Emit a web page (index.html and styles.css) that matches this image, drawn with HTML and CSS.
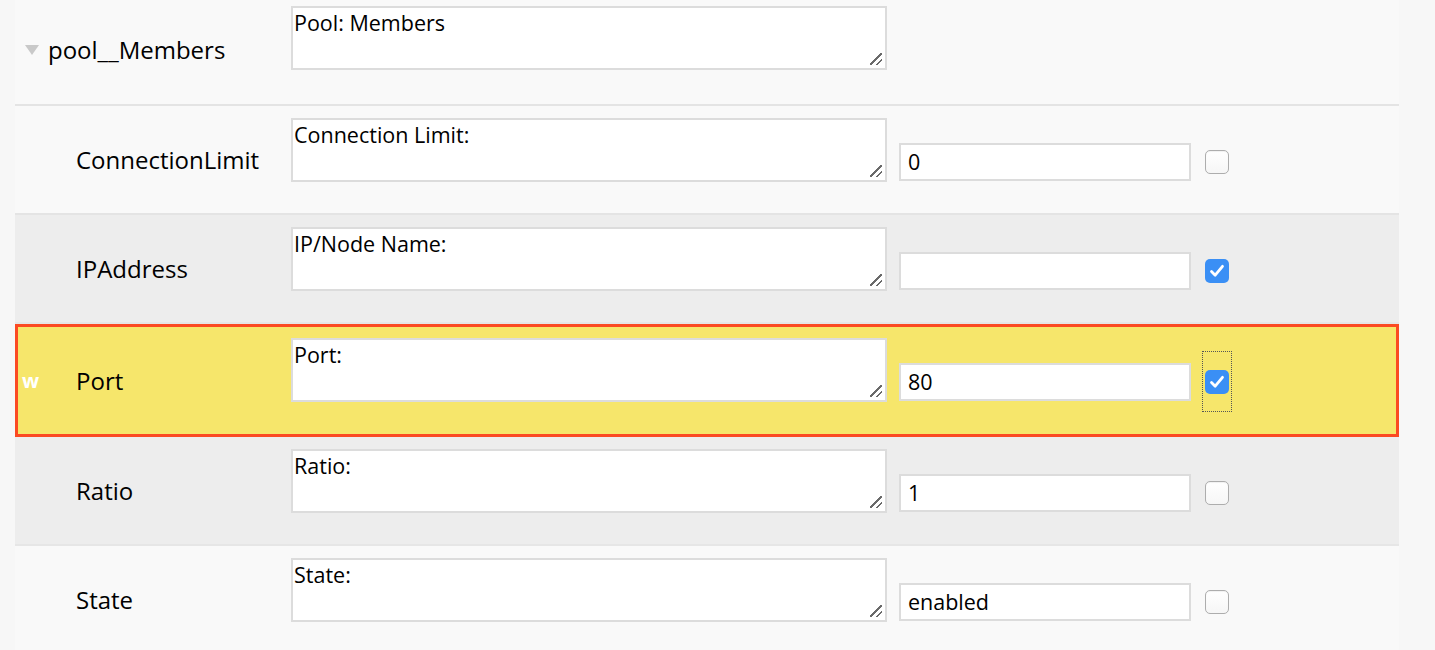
FILE: index.html
```html
<!DOCTYPE html>
<html lang="en">
<head>
<meta charset="utf-8">
<title>pool__Members</title>
<link rel="stylesheet" href="styles.css">
</head>
<body>
<div class="sheet">
  <div class="group-head">
    <div class="group-label"><span class="caret"></span><span>pool__Members</span></div>
    <textarea class="desc">Pool: Members</textarea>
  </div>

  <div class="row row--light">
    <div class="label"><span class="marker"></span><span>ConnectionLimit</span></div>
    <textarea class="desc">Connection Limit:</textarea>
    <div class="value">
      <input class="text" type="text" value="0">
      <span class="check-wrap"><span class="check"></span></span>
    </div>
  </div>

  <div class="row row--gray">
    <div class="label"><span class="marker"></span><span>IPAddress</span></div>
    <textarea class="desc">IP/Node Name:</textarea>
    <div class="value">
      <input class="text" type="text" value="">
      <span class="check-wrap"><span class="check check--on"><svg viewBox="0 0 24 24" width="24" height="24"><path d="M6.5 12.5 L10.2 16.2 L17.5 7.3" fill="none" stroke="#fff" stroke-width="2.8" stroke-linecap="round" stroke-linejoin="round"/></svg></span></span>
    </div>
  </div>

  <div class="row row--flagged">
    <div class="label"><span class="marker">w</span><span>Port</span></div>
    <textarea class="desc">Port:</textarea>
    <div class="value">
      <input class="text" type="text" value="80">
      <span class="check-wrap check-wrap--focus"><span class="check check--on"><svg viewBox="0 0 24 24" width="24" height="24"><path d="M6.5 12.5 L10.2 16.2 L17.5 7.3" fill="none" stroke="#fff" stroke-width="2.8" stroke-linecap="round" stroke-linejoin="round"/></svg></span></span>
    </div>
  </div>

  <div class="row row--gray">
    <div class="label"><span class="marker"></span><span>Ratio</span></div>
    <textarea class="desc">Ratio:</textarea>
    <div class="value">
      <input class="text" type="text" value="1">
      <span class="check-wrap"><span class="check"></span></span>
    </div>
  </div>

  <div class="row row--light">
    <div class="label"><span class="marker"></span><span>State</span></div>
    <textarea class="desc">State:</textarea>
    <div class="value">
      <input class="text" type="text" value="enabled">
      <span class="check-wrap"><span class="check"></span></span>
    </div>
  </div>
</div>
</body>
</html>
```

FILE: styles.css
```css
html, body {
  margin: 0;
  padding: 0;
  background: #f7f7f7;
  font-family: "Open Sans", "Noto Sans", sans-serif;
  color: #000;
  overflow: hidden;
}

.sheet {
  margin: 0 36px 0 15px;
  background: #f9f9f9;
}

.group-head {
  display: flex;
  align-items: flex-start;
  height: 106px;
  box-sizing: border-box;
  padding-top: 6px;
  border-bottom: 2px solid #e4e4e4;
}

.group-label {
  width: 276px;
  flex: none;
  display: flex;
  align-items: center;
  height: 86px;
  padding-left: 10px;
  box-sizing: border-box;
  font-size: 24px;
}

.caret {
  width: 0;
  height: 0;
  border-left: 7px solid transparent;
  border-right: 7px solid transparent;
  border-top: 10px solid #c9c9c9;
  margin-right: 9px;
  margin-top: 2px;
}

.desc {
  flex: none;
  width: 596px;
  height: 64px;
  box-sizing: border-box;
  border: 2px solid #dcdcdc;
  border-radius: 0;
  background-color: #fff;
  background-image: linear-gradient(135deg, transparent 0 44%, #6a6a6a 44% 55%, transparent 55% 71%, #6a6a6a 71% 82%, transparent 82%);
  background-size: 12px 12px;
  background-position: right 3px bottom 3px;
  background-repeat: no-repeat;
  margin: 0;
  padding: 0 1px;
  font-family: "Open Sans", "Noto Sans", sans-serif;
  font-size: 21.5px;
  color: #000;
  resize: none;
  outline: none;
}

.row {
  display: flex;
  align-items: flex-start;
  height: 109px;
  box-sizing: border-box;
  padding-top: 12px;
  border-bottom: 2px solid #e4e4e4;
}

.row--light { background: #f9f9f9; }
.row--gray { background: #ededed; border-bottom-color: #e6e6e6; }

.row--flagged {
  background: #f6e66b;
  height: 113px;
  padding-top: 14px;
  border-bottom: 0;
  outline: 3px solid #fb4a22;
  outline-offset: -3px;
}

.label {
  flex: none;
  width: 276px;
  align-self: stretch;
  display: flex;
  align-items: center;
  padding-left: 7px;
  box-sizing: border-box;
  font-size: 24px;
  margin-top: -12px;
}

.row--flagged .label { margin-top: -14px; }

.marker {
  width: 54px;
  flex: none;
  color: #fff;
  font-weight: 700;
  font-size: 20px;
}

.value {
  display: flex;
  align-items: center;
  margin-left: 12px;
  margin-top: 14px;
}

.text {
  width: 292px;
  height: 38px;
  box-sizing: border-box;
  border: 2px solid #dcdcdc;
  border-radius: 0;
  background: #fff;
  margin: 0;
  padding: 0 7px;
  font-family: "Open Sans", "Noto Sans", sans-serif;
  font-size: 21.5px;
  color: #000;
  outline: none;
}

.check-wrap {
  margin-left: 12px;
  width: 28px;
  height: 59px;
  box-sizing: border-box;
  display: flex;
  align-items: center;
  justify-content: center;
}

.check-wrap--focus {
  outline: 1px dotted #555;
  outline-offset: 0;
}

.check {
  width: 24px;
  height: 24px;
  box-sizing: border-box;
  border-radius: 5px;
  border: 1px solid #adadad;
  background: linear-gradient(#ffffff, #f6f6f6);
  display: block;
  box-shadow: inset 0 1px 1px rgba(0,0,0,0.06);
}

.check--on {
  border: 0;
  background: #3a8ff5;
  box-shadow: none;
}

.check--on svg { display: block; }
```
